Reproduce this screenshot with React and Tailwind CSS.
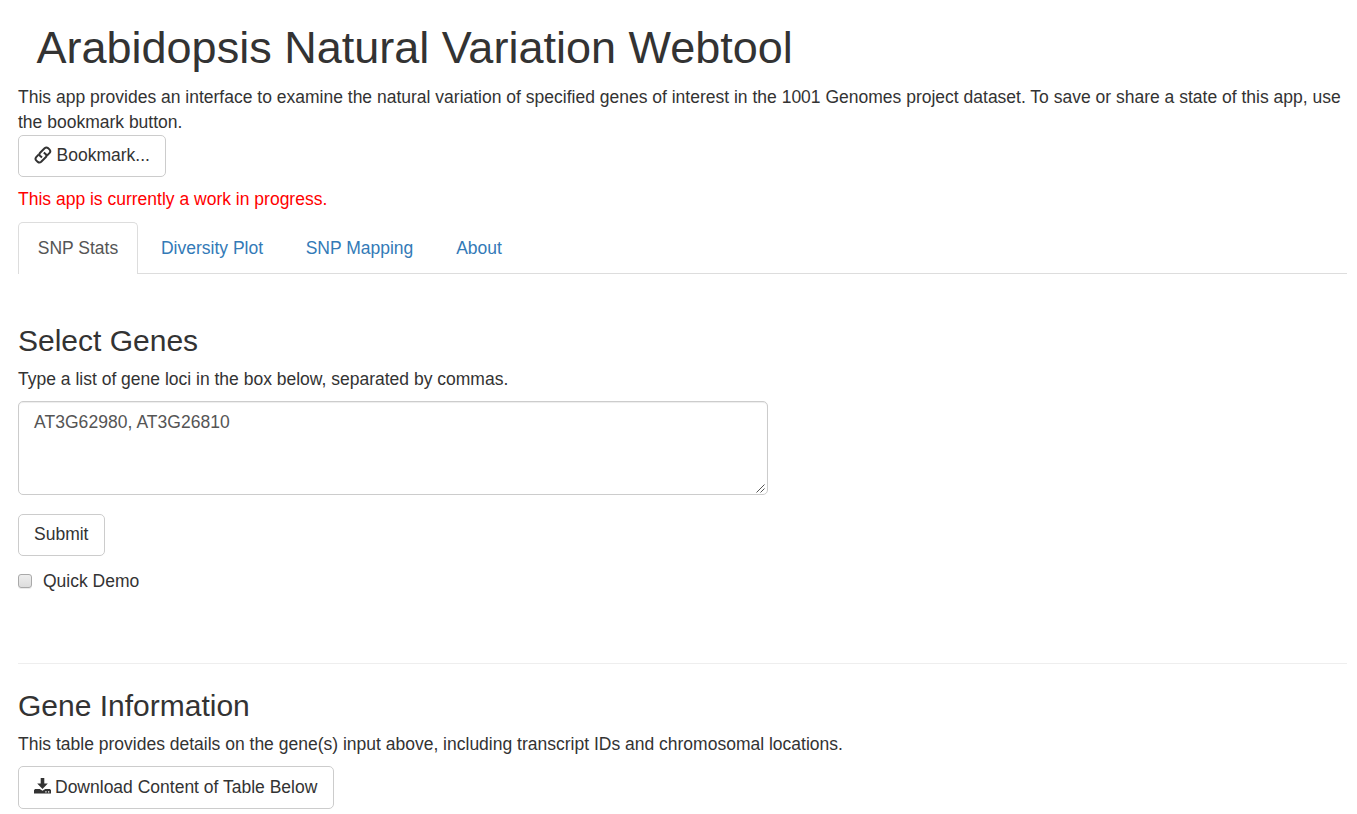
const btn = "flex h-[42px] items-center rounded-[5px] border border-[#cccccc] bg-white px-[15px] pb-[2px] text-[#333333]";
const tabs = ["Diversity Plot", "SNP Mapping", "About"];
const tabWidths = ["w-[145px]", "w-[150px]", "w-[89px]"];

function LinkIcon() {
  const hook = "M13 9.6 15.6 6.9Q17 5.2 15.6 3.6L14 2.1Q12.3 0.8 10.6 2.3L6.1 6.8Q4.6 8.3 6 9.8L8 11.6";
  return (
    <svg viewBox="0 0 18 18" className="h-[18px] w-[18px]" fill="none" stroke="#333333" strokeWidth="2">
      <path d={hook} />
      <path d={hook} transform="rotate(180 8.9 9)" />
    </svg>
  );
}

function DownloadIcon() {
  return (
    <svg viewBox="0 0 17 17" className="h-[17px] w-[17px]" fill="#333333">
      <path d="M6.7 0h3.6v5.6h3.5L8.5 10.9 3.2 5.6h3.5z" />
      <path fillRule="evenodd" d="M1 11h4.8l2.7 1.7 2.7-1.7H16l1 1.2v3.4H0v-3.4zM11.3 13.2v1.2h1.3v-1.2zM14 13.2v1.2h1.3v-1.2z" />
    </svg>
  );
}

export default function App() {
  return (
    <div className="h-[814px] overflow-hidden bg-white pl-[18px] pr-[10px] font-['Liberation_Sans',Arial,sans-serif] text-[17.5px] leading-[25px] text-[#333333]">
      <h1 className="pl-[18.5px] pt-[23px] text-[45px] leading-[50px]">Arabidopsis Natural Variation Webtool</h1>
      <p className="mt-3 w-[1335px]">This app provides an interface to examine the natural variation of specified genes of interest in the 1001 Genomes project dataset. To save or share a state of this app, use the bookmark button.</p>
      <button className={`${btn} w-[148px] gap-[4.5px] whitespace-nowrap`}><span className="pb-px"><LinkIcon /></span>Bookmark...</button>
      <p className="mt-[10px] text-[#ff0000]">This app is currently a work in progress.</p>
      <nav className="mt-[10px] flex h-[52px] border-b border-[#dddddd]">
        <a className="-mb-px mr-[1.5px] flex h-[52px] w-[120px] items-center justify-center rounded-t-[5px] border border-b-0 border-[#dddddd] bg-white text-[#555555]">SNP Stats</a>
        {tabs.map((t, i) => <a key={t} className={`flex items-center justify-center pt-px text-[#337ab7] ${tabWidths[i]}`}>{t}</a>)}
      </nav>
      <h2 className="mt-[50px] text-[30px] leading-[33px]">Select Genes</h2>
      <p className="mt-[10px]">Type a list of gene loci in the box below, separated by commas.</p>
      <div className="relative mt-[9px] w-[750px]">
        <textarea defaultValue="AT3G62980, AT3G26810" className="block h-[94px] w-full resize-none rounded-[5px] border border-[#cccccc] px-[15px] py-[8px] tracking-[0.05px] text-[#555555] shadow-[inset_0_1px_1px_rgba(0,0,0,0.075)]" />
        <svg viewBox="0 0 9 9" className="pointer-events-none absolute bottom-[2px] right-[3px] h-[9px] w-[9px]" stroke="#555555" strokeWidth="1">
          <path d="M0.5 8.5 8.5 0.5M4.5 8.5 8.5 4.5" />
        </svg>
      </div>
      <button className={`${btn} mt-[19px] w-[87px]`}>Submit</button>
      <label className="mt-[13px] flex items-center gap-[11px]">
        <span className="mb-px h-[14px] w-[14px] rounded-[3px] border border-[#a9a9a9] bg-linear-to-b from-[#eeeeee] to-[#dddddd] shadow-[0_1px_0_rgba(0,0,0,0.08)]" />Quick Demo
      </label>
      <hr className="mt-[69px] border-[#eeeeee]" />
      <h2 className="mt-[25px] text-[30px] leading-[33px]">Gene Information</h2>
      <p className="mt-[10px]">This table provides details on the gene(s) input above, including transcript IDs and chromosomal locations.</p>
      <button className={`${btn} mt-[9px] h-[43px] w-[316px] gap-1 whitespace-nowrap`}><DownloadIcon /><span className="pt-[2px]">Download Content of Table Below</span></button>
    </div>
  );
}
